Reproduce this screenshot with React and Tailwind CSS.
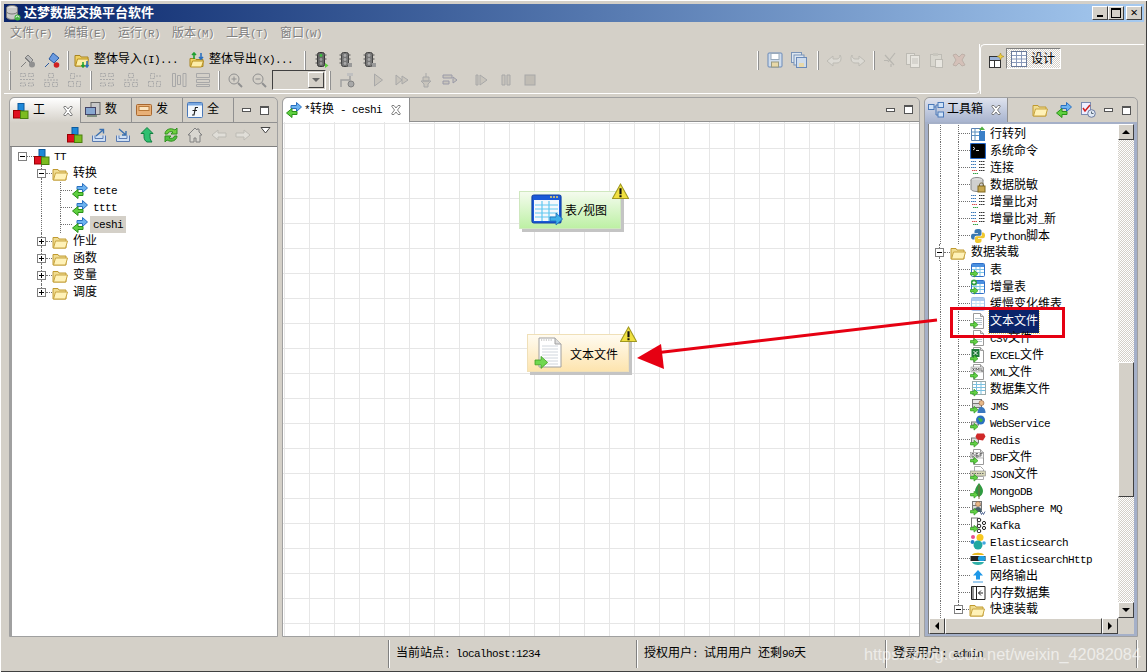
import React from 'react';

const FONT = '"Liberation Mono", "Noto Sans CJK SC", monospace';

// latin runs sit in a narrow span so they take the 6px cell of the original bitmap font
function Label({ text, className = '' }) {
  const parts = text.split(/([\x00-\x7f]+)/).filter(Boolean);
  return (
    <span className={`whitespace-pre text-[12px] leading-[14px] ${className}`}>
      {parts.map((p, i) =>
        /^[\x00-\x7f]/.test(p) ? <span key={i} className="text-[11px] tracking-[-0.6px]">{p}</span> : <span key={i}>{p}</span>
      )}
    </span>
  );
}

const GA = () => <path d="M0.5 12.5h3.5v-2.2l4 3.4-4 3.4v-2.2H0.5z" transform="translate(0 -2)" fill="#62d045" stroke="#2f9a1f" strokeWidth=".7" />;
const DocBase = ({ children }) => (
  <>
    <path d="M3.5 .5h7l3 3v12h-10z" fill="#fff" stroke="#9a9a9a" />
    <path d="M10.5 .5v3h3" fill="#ddd" stroke="#9a9a9a" />
    {children}
    <GA />
  </>
);
const Lines = () => <path d="M5 5.5h7M5 7.5h7M5 9.5h7M5 11.5h7" stroke="#b8c4cc" />;
const TableBase = ({ faded }) => (
  <g opacity={faded ? 0.45 : 1}>
    <rect x="1.5" y="1.5" width="13" height="13" rx="1" fill="#fff" stroke="#2f6fc8" />
    <rect x="2" y="2" width="12" height="3" fill="#4a90e0" />
    <path d="M2 7.5h12M2 10.5h12M6 5v9M10 5v9" stroke="#7fc4e8" />
  </g>
);
const Server = () => (
  <>
    <rect x="2.5" y="1.5" width="9" height="4" fill="#e8e8e8" stroke="#777" />
    <rect x="2.5" y="5.5" width="9" height="4" fill="#d8d8d8" stroke="#777" />
  </>
);
const ColorGrid = () => (
  <>
    <path d="M1 1.5h5M1 4.5h5M1 7.5h5" stroke="#3a78b8" strokeWidth="1.2" strokeDasharray="1.5 .5" />
    <path d="M9 1.5h6M9 4.5h6M9 7.5h6M9 10.500h6" stroke="#333" strokeWidth="1.2" strokeDasharray="1.5 .5" />
    <path d="M2 10.500h5" stroke="#d85050" strokeWidth="1.2" strokeDasharray="1.5 .5" />
    <path d="M3 13.500h5" stroke="#30a040" strokeWidth="1.2" strokeDasharray="1.5 .5" />
  </>
);

const ICONS = {
  blocks: (
    <>
      <rect x="5" y="0.5" width="6" height="7" fill="#1e88d8" stroke="#0c5a9e" />
      <rect x="0.5" y="7.5" width="7" height="7.5" fill="#e01020" stroke="#900" />
      <rect x="7.5" y="8" width="7.5" height="7.5" fill="#7cbc20" stroke="#4a8010" />
    </>
  ),
  folder: (
    <>
      <path d="M1 3.5h5l1 1.5h7v9H1z" fill="#f0dc90" stroke="#c09a30" />
      <path d="M1.5 14l2-7h12l-2 7z" fill="#fff2b8" stroke="#c8a440" />
    </>
  ),
  swap: (
    <>
      <path d="M5 3.5h5.5v-3l5 4.5-5 4.5v-3H5z" fill="#6cb2f0" stroke="#2a70c0" />
      <path d="M11 9.5H6v-3l-5.5 4.5L6 15.5v-3h5z" fill="#5fd040" stroke="#2a9018" />
    </>
  ),
  plugOff: (
    <>
      <path d="M1 15l5-5M6 6l4 4M8 3l5 5-3 3-5-5z" fill="#bbb" stroke="#808080" />
      <circle cx="12" cy="12.500" r="3" fill="#909090" />
    </>
  ),
  plugOn: (
    <>
      <path d="M1 15l4-4M9 1l6 5-5 5-5-4z" fill="#6a9ae0" stroke="#2a5aa0" />
      <circle cx="12.500" cy="13" r="2.800" fill="#d02020" />
    </>
  ),
  folderIn: (
    <>
      <path d="M1 3.5h5l1 1.5h7v9H1z" fill="#f0d060" stroke="#a88420" />
      <path d="M1.5 14l2-7h11l-2 7z" fill="#fdeea8" stroke="#b89020" />
      <path d="M9 10v5M7.5 13l1.5 2 1.5-2" stroke="#20a030" fill="none" strokeWidth="1.5" />
      <path d="M13 9v6M11.5 13l1.5 2 1.5-2" stroke="#2a70c0" fill="none" strokeWidth="1.5" />
    </>
  ),
  folderOut: (
    <>
      <path d="M1 6.5h5l1 1h7v7H1z" fill="#f0d060" stroke="#a88420" />
      <path d="M1.5 15l2-6h11l-2 6z" fill="#fdeea8" stroke="#b89020" />
      <path d="M5 7V1M3 3l2-2 2 2" stroke="#20a030" fill="none" strokeWidth="1.6" />
      <path d="M12 1v6M10 5l2 2 2-2" stroke="#2a70c0" fill="none" strokeWidth="1.6" />
    </>
  ),
  lightOn: (
    <>
      <rect x="4.5" y="0.5" width="7" height="14" rx="2" fill="#666" stroke="#333" />
      <circle cx="8" cy="3.5" r="1.4" fill="#3bc040" />
      <circle cx="8" cy="7.5" r="1.4" fill="#999" />
      <circle cx="8" cy="11.5" r="1.4" fill="#999" />
      <path d="M2.5 3h2M2.5 7h2M2.5 11h2M11.5 3h2M11.5 7h2" stroke="#555" />
      <path d="M12 11l3.5 2.5-3.5 2.5z" fill="#5fd040" />
    </>
  ),
  lightOff: (
    <>
      <rect x="4.5" y="0.5" width="7" height="14" rx="2" fill="#777" stroke="#444" />
      <circle cx="8" cy="3.5" r="1.4" fill="#aaa" />
      <circle cx="8" cy="7.5" r="1.4" fill="#aaa" />
      <circle cx="8" cy="11.5" r="1.4" fill="#aaa" />
      <path d="M2.5 3h2M2.5 7h2M2.5 11h2M11.5 3h2M11.5 7h2" stroke="#555" />
      <rect x="11" y="11" width="4" height="4" fill="#999" />
    </>
  ),
  layA: <path d="M1.5 1.5h5v3h-5zM9.5 1.5h5v3h-5zM1.5 11h5v3h-5zM9.5 11h5v3h-5zM1 7.5h14" fill="none" stroke="#a8a8a8" strokeDasharray="2 1" />,
  layB: <path d="M5.5 1.5h5v4h-5zM1.5 10.5h5v4h-5zM9.5 10.5h5v4h-5zM1 8h14" fill="none" stroke="#a8a8a8" strokeDasharray="2 1" />,
  layC: <path d="M3.5 1.5h4v5h-4zM9.5 9.5h4v5h-4zM1.5 9.5h5v5h-5zM9 4h6" fill="none" stroke="#a8a8a8" strokeDasharray="2 1" />,
  layD: <path d="M1.5 1.5h3v13h-3zM6.5 3.5h3v9h-3zM12 1.5h3v13h-3z" fill="none" stroke="#a8a8a8" />,
  layE: <path d="M1.5 1.5h13v4h-13zM1.5 7.5h13v3h-13zM1.5 12.5h13v2h-13z" fill="none" stroke="#a8a8a8" />,
  zoomIn: (
    <>
      <circle cx="7" cy="7" r="5" fill="none" stroke="#909090" />
      <path d="M4.5 7h5M7 4.5v5" stroke="#909090" />
      <path d="M11 11l4 4" stroke="#909090" strokeWidth="2" />
    </>
  ),
  zoomOut: (
    <>
      <circle cx="7" cy="7" r="5" fill="none" stroke="#909090" />
      <path d="M4.5 7h5" stroke="#909090" />
      <path d="M11 11l4 4" stroke="#909090" strokeWidth="2" />
    </>
  ),
  route: (
    <>
      <path d="M2 15V8h9V2" fill="none" stroke="#a0a0a0" strokeWidth="1.5" />
      <rect x="8" y="1" width="6" height="3" fill="#c0c0c0" />
      <circle cx="12" cy="12" r="3" fill="#a8a8a8" stroke="#808080" />
    </>
  ),
  run: <path d="M4.5 2l8 6-8 6z" fill="#c8c4bc" stroke="#a8a8a8" />,
  run2: <path d="M2 3l6 5-6 5zM8 4l6 4-6 4z" fill="#c8c4bc" stroke="#a8a8a8" />,
  bug: <path d="M8 1v4M5 5h6v4H5zM3 9h10l-3 3v3H6v-3z" fill="#c8c4bc" stroke="#a8a8a8" />,
  step: <path d="M1 3h9v3H1zM1 9h6v3H1zM11 5l4 3-4 3z" fill="#c8c4bc" stroke="#9a9aa8" />,
  pauseRun: <path d="M2 3h2v10H2zM6 3l7 5-7 5z" fill="#c8c4bc" stroke="#a8a8a8" />,
  pause: <path d="M4 3h3v10H4zM9 3h3v10H9z" fill="#c8c4bc" stroke="#a8a8a8" />,
  stop: <rect x="3" y="3" width="10" height="10" fill="#c0bcb4" stroke="#a8a8a8" />,
  save: (
    <>
      <rect x="1" y="1" width="14" height="14" rx="1" fill="#cfdcec" stroke="#6a8ab8" />
      <rect x="4" y="1.5" width="8" height="6" fill="#fff" stroke="#9ab" />
      <rect x="4.5" y="10" width="7" height="5" fill="#e8d8a8" stroke="#9a9a80" />
    </>
  ),
  saveAll: (
    <>
      <rect x="0.5" y="0.5" width="10" height="10" fill="#dde6f0" stroke="#7a94b8" />
      <rect x="3" y="3" width="10" height="10" fill="#dde6f0" stroke="#7a94b8" />
      <rect x="5.5" y="5.5" width="10" height="10" fill="#cfdcec" stroke="#6a8ab8" />
      <rect x="8" y="11" width="5" height="4" fill="#e8d8a8" />
    </>
  ),
  undo: <path d="M1 9l6-5v3h4c2 0 3-2 3-4 2 3 1 8-3 8H7v3z" fill="#dcdad4" stroke="#bdbbb4" />,
  redo: <path d="M15 9l-6-5v3H5C3 7 2 5 2 3c-2 3-1 8 3 8h4v3z" fill="#dcdad4" stroke="#bdbbb4" />,
  cut: <path d="M13 1L6 10M3 3l9 10M2 8.5h4M9 12v3" fill="none" stroke="#b8b6b0" strokeWidth="1.2" />,
  copy: (
    <>
      <rect x="1.5" y="1.5" width="8" height="11" fill="#e4e2dc" stroke="#bdbbb4" />
      <rect x="5.5" y="3.5" width="9" height="12" fill="#e8e6e0" stroke="#bdbbb4" />
      <path d="M7 7h6M7 9h6M7 11h6" stroke="#c4c2bc" />
    </>
  ),
  paste: (
    <>
      <rect x="2.5" y="2.5" width="11" height="12" fill="#d8d6ce" stroke="#bdbbb4" />
      <rect x="5" y="1" width="5" height="3" fill="#c8c6be" />
      <rect x="7.5" y="7.5" width="7" height="8" fill="#e8e6e0" stroke="#bdbbb4" />
    </>
  ),
  del: <path d="M2 3l3-1 3 3 3-3 3 1-3 5 3 5-3 1-3-3-3 3-3-1 3-5z" fill="#d4c0b8" stroke="#bdb0a8" />,
  newPersp: (
    <>
      <rect x="1.5" y="3.5" width="11" height="11" fill="#fff" stroke="#333" />
      <path d="M1.5 7.5h11M6.5 7.5v7" stroke="#333" />
      <rect x="2" y="4" width="10" height="3" fill="#9ab2d8" />
      <path d="M12.5 0l1 2.5 2.5 1-2.5 1-1 2.5-1-2.5-2.5-1 2.5-1z" fill="#f0d040" stroke="#a08010" strokeWidth=".5" />
    </>
  ),
  grid: (
    <>
      <rect x="0.5" y="0.5" width="15" height="15" fill="#fff" stroke="#6a7a9a" />
      <path d="M5.5 1v14M10.5 1v14M1 4.5h14M1 8h14M1 11.5h14" stroke="#8a9aba" />
    </>
  ),
  fx: (
    <>
      <rect x="0.5" y="0.5" width="15" height="15" rx="1" fill="#f4f8fc" stroke="#4a78b8" />
      <rect x="1" y="1" width="14" height="2.500" fill="#7aa8e0" />
      <path d="M11 5.500H8.500L7 13H5M5.500 8.500h4.500" fill="none" stroke="#222" strokeWidth="1.200" />
    </>
  ),
  computer: (
    <>
      <rect x="6" y="0.500" width="9" height="12" fill="#c8c8c8" stroke="#666" />
      <rect x="0.500" y="5.500" width="10" height="7" fill="#88a8d0" stroke="#446" />
      <rect x="2" y="13" width="10" height="2" fill="#809080" />
    </>
  ),
  inbox: (
    <>
      <rect x="0.500" y="2.500" width="15" height="11" rx="1" fill="#e8b078" stroke="#a86830" />
      <rect x="3" y="4.500" width="10" height="4" fill="#fbe4c0" stroke="#b87838" />
    </>
  ),
  toolbox: (
    <>
      <rect x="0.5" y="2.5" width="5.5" height="5" fill="#cfe2f8" stroke="#4a78b8" />
      <rect x="10" y="0.5" width="5.5" height="5" fill="#cfe2f8" stroke="#4a78b8" />
      <rect x="10" y="10" width="5.5" height="5" fill="#cfe2f8" stroke="#4a78b8" />
      <path d="M6 5h2M8 3v10h2M8 3h2" fill="none" stroke="#4a78b8" />
    </>
  ),
  check: (
    <>
      <rect x="1.5" y="0.5" width="9" height="12" fill="#eef" stroke="#7a8ab0" />
      <path d="M3 6l2 3 5-6" stroke="#d02020" strokeWidth="1.5" fill="none" />
      <circle cx="11.5" cy="11.5" r="3.8" fill="#dfe8f4" stroke="#6a7aa0" />
      <path d="M11.5 9.5v2h2" stroke="#567" fill="none" />
    </>
  ),
  exportUp: (
    <>
      <path d="M1.5 8.5v6h13v-6M4 8.5v3h8v-3" fill="#cfe0f4" stroke="#5a7ab0" />
      <path d="M5 9l7-6M8.5 2.5h4v4" fill="none" stroke="#3a70b0" strokeWidth="1.4" />
    </>
  ),
  importDown: (
    <>
      <path d="M1.5 8.5v6h13v-6M4 8.5v3h8v-3" fill="#cfe0f4" stroke="#5a7ab0" />
      <path d="M4 2l7 6M11 4v4H7" fill="none" stroke="#3a70b0" strokeWidth="1.4" />
    </>
  ),
  upGreen: <path d="M8 0.5l6 6h-3v3c0 3 1 4 2 5.5H8c-2-1-3-3-3-5.5v-3H2z" fill="#30c070" stroke="#108040" />,
  sync: (
    <>
      <path d="M2 7c0-4 5-7 10-4l2-2v6H8l2-2C7 4 5 5 4.500 7z" fill="#70d040" stroke="#309020" />
      <path d="M14 9c0 4-5 7-10 4l-2 2V9h6l-2 2c3 1 5 0 5.500-2z" fill="#50c040" stroke="#309020" />
    </>
  ),
  home: <path d="M8 1L1 8h2v7h4v-4h2v4h4V8h2l-3-3V2h-2v1z" fill="#d8d6d0" stroke="#808080" />,
  left: <path d="M1 8l6-5v3h8v4H7v3z" fill="#e0ded8" stroke="#bdbbb4" />,
  right: <path d="M15 8L9 3v3H1v4h8v3z" fill="#e0ded8" stroke="#bdbbb4" />,
  db: (
    <>
      <ellipse cx="7" cy="3" rx="5.500" ry="2.500" fill="#e0e0e0" stroke="#777" />
      <path d="M1.5 3v9c0 1.500 3 2.500 5.500 2.500s5.500-1 5.500-2.500V3" fill="#c8c8c8" stroke="#777" />
      <path d="M1.5 6.500c0 1.500 3 2.500 5.500 2.500s5.500-1 5.500-2.500" fill="none" stroke="#777" />
      <circle cx="12.500" cy="12.500" r="3" fill="#40b040" />
      <path d="M11 12.500a1.500 1.500 0 0 1 3 0" fill="none" stroke="#fff" />
    </>
  ),
  tFlip: (
    <>
      <path d="M1.5 2.500h9v12h-9z" fill="#fff" stroke="#5a80b0" />
      <path d="M1.500 6h9M1.500 9.500h9M5 2.500v12" stroke="#5a90c0" />
      <rect x="9" y="5" width="6" height="10" fill="#3a80c8" />
      <path d="M9 4l3-3.500 3 3.500z" fill="#50b040" />
    </>
  ),
  terminal: (
    <>
      <rect x="0.500" y="0.500" width="15" height="15" rx="1" fill="#000" stroke="#2a6ac8" strokeWidth="1.200" />
      <path d="M3 4l2 1.500-2 1.500M6 7.500h3" stroke="#ddd" fill="none" />
    </>
  ),
  conn: <ColorGrid />,
  mask: (
    <>
      <ellipse cx="7" cy="3" rx="6" ry="2.500" fill="#e0e0e0" stroke="#888" />
      <path d="M1 3v9c0 1.500 3 2.500 6 2.500s6-1 6-2.500V3" fill="#d0d0d0" stroke="#888" />
      <rect x="8" y="9" width="7" height="6" fill="#c8a850" stroke="#806820" />
      <path d="M9.500 9V7.500c0-2 4-2 4 0V9" fill="none" stroke="#706030" />
    </>
  ),
  python: (
    <>
      <path d="M8 1C5 1 4.500 2 4.500 3.500V5H8v.7H3C1.500 5.700 1 7 1 8.500s.5 3 2 3h1.500V9.500c0-1 .8-1.800 1.800-1.800h3.400c1 0 1.800-.8 1.800-1.800V3C11.500 1.500 10 1 8 1z" fill="#3a78b0" />
      <path d="M8 15c3 0 3.500-1 3.500-2.500V11H8v-.7h5c1.500 0 2-1.300 2-2.800s-.5-3-2-3h-1V6.500c0 1-.8 1.800-1.800 1.800H6.800c-1 0-1.800.8-1.800 1.800V13c0 1.500 1 2 3 2z" fill="#f0c830" />
    </>
  ),
  tbl: (
    <>
      <TableBase />
      <GA />
    </>
  ),
  tblPlus: (
    <>
      <TableBase />
      <circle cx="4" cy="3.500" r="3" fill="#30a040" />
      <path d="M2.500 3.500h3M4 2v3" stroke="#fff" />
      <GA />
    </>
  ),
  tblFaded: <TableBase faded />,
  doc: (
    <DocBase>
      <Lines />
    </DocBase>
  ),
  csv: (
    <DocBase>
      <Lines />
    </DocBase>
  ),
  excel: (
    <DocBase>
      <rect x="1.500" y="2" width="8" height="8" fill="#1f7a3a" />
      <path d="M3.500 4l4 4M7.500 4l-4 4" stroke="#fff" />
    </DocBase>
  ),
  xml: (
    <DocBase>
      <rect x="1" y="3" width="12" height="5" fill="#e8e8e8" stroke="#888" strokeWidth=".5" />
      <path d="M2.500 4l2 3M4.500 4l-2 3M6 7V4l1.500 2L9 4v3M11 4v3h2" stroke="#333" strokeWidth=".6" fill="none" />
    </DocBase>
  ),
  dataset: (
    <>
      <rect x="2.500" y="0.500" width="13" height="13" fill="#fff" stroke="#9aa" />
      <path d="M3 3.500h12M3 6.500h12M3 9.500h12M6.500 1v12M11 1v12" stroke="#7ac0e0" />
      <GA />
    </>
  ),
  jms: (
    <>
      <Server />
      <circle cx="11.500" cy="5" r="2.500" fill="#e8b888" stroke="#805030" strokeWidth=".5" />
      <path d="M7.500 15c0-4 2-6 4-6s4 2 4 6z" fill="#3a78c0" />
      <GA />
    </>
  ),
  ws: (
    <>
      <rect x="1.500" y="7" width="7" height="3" fill="#ddd" stroke="#777" />
      <circle cx="10.500" cy="5" r="4.500" fill="#2a70c0" />
      <path d="M8 3c2-1 3 1 4 1s1 3-1 3-2-2-3-4z" fill="#40b040" />
      <GA />
    </>
  ),
  redis: (
    <>
      <rect x="1.500" y="6" width="7" height="5" fill="#ddd" stroke="#777" />
      <path d="M7 1.500l7 0 1.500 3-2.500 4-6-1-1.500-3z" fill="#d02828" />
      <GA />
    </>
  ),
  dbf: (
    <DocBase>
      <rect x="0.500" y="3.500" width="13" height="5.500" fill="#f4f4f4" stroke="#888" strokeWidth=".5" />
      <path d="M2 4.500v3.500h1.500l.8-1.700L3.500 4.500zM6 4.500v3.500h2.200V6.300H6M6 4.500h2M10 4.500v3.500M10 4.500h2.500M10 6h2" stroke="#222" strokeWidth=".6" fill="none" />
    </DocBase>
  ),
  json: (
    <>
      <path d="M4.500 .5h6l3 3v4h-9z" fill="#fff" stroke="#aaa" />
      <rect x="0.500" y="5" width="15" height="5" fill="#d8d8b8" stroke="#888" strokeWidth=".6" />
      <path d="M2 7.500h12" stroke="#666" strokeDasharray="1.500 1" />
      <path d="M4.500 10.500h9v3h-9z" fill="#fff" stroke="#aaa" />
      <GA />
    </>
  ),
  mongo: (
    <>
      <path d="M9 0c2 3 4 5 4 8s-2 5-4 6c-2-1-4-3-4-6s2-5 4-8z" fill="#2f9a40" />
      <path d="M9 2v14" stroke="#7a6a40" />
      <GA />
    </>
  ),
  mq: (
    <>
      <Server />
      <circle cx="8" cy="4" r="2.500" fill="#e8b888" stroke="#805030" strokeWidth=".5" />
      <path d="M4 12c0-3 2-5 4-5s4 2 4 5z" fill="#48606a" />
      <path d="M10 11.500l1.500 3 1-2 1 2 1.500-3" stroke="#304a80" fill="none" strokeWidth=".8" />
      <GA />
    </>
  ),
  kafka: (
    <>
      <rect x="1.500" y="1" width="6" height="9" fill="#fff" stroke="#777" />
      <circle cx="9" cy="3" r="1.800" fill="#fff" stroke="#222" />
      <circle cx="9" cy="9" r="1.800" fill="#fff" stroke="#222" />
      <circle cx="9" cy="14" r="1.800" fill="#fff" stroke="#222" />
      <circle cx="14" cy="6" r="1.600" fill="#fff" stroke="#222" />
      <circle cx="14" cy="11" r="1.600" fill="#fff" stroke="#222" />
      <GA />
    </>
  ),
  es: (
    <>
      <circle cx="10" cy="3.500" r="3.500" fill="#f8c820" />
      <circle cx="3" cy="3" r="2" fill="#e85090" />
      <circle cx="8" cy="11" r="4.500" fill="#20a8a0" />
      <circle cx="2.500" cy="8" r="2" fill="#2080c8" />
      <circle cx="14" cy="9" r="1.800" fill="#40a8e0" />
    </>
  ),
  esHttp: (
    <>
      <path d="M2 4c1-3 11-3 12 0z" fill="#e8b820" />
      <rect x="0.500" y="5" width="15" height="5" fill="#222" />
      <rect x="8" y="5" width="7.500" height="5" rx="2" fill="#20a0e0" />
      <path d="M2 11c1 4 11 4 12 0z" fill="#30b0a8" />
    </>
  ),
  upBlue: (
    <>
      <path d="M8 2l5 5.500H10v4H6v-4H3z" fill="#1e98e8" />
      <path d="M3 14h10" stroke="#80bce8" strokeWidth="1.500" />
    </>
  ),
  mem: (
    <>
      <path d="M3 1.500H1.500v13H3M3 1.500h12v13H3zM6.500 1.500v13" fill="#fff" stroke="#222" />
      <path d="M13 8H8.500M11 5.500L8.500 8l2.500 2.500" fill="none" stroke="#222" />
    </>
  ),
  warn: (
    <>
      <path d="M8 1L15.500 14.500H.5z" fill="#f0e040" stroke="#a09820" />
      <path d="M8 5v5.500M8 11.500v2" stroke="#111" strokeWidth="2" />
    </>
  ),
  bigWin: (
    <>
      <rect x="0.500" y="0.500" width="14.500" height="14" rx="1" fill="#1a5ad8" stroke="#1040a8" strokeWidth=".6" />
      <rect x="1.500" y="3" width="12.500" height="10.500" fill="#f4f8fc" />
      <path d="M9.500 1.500h1M11 1.500h1M12.500 1.500h1" stroke="#f0d060" strokeWidth=".8" />
      <path d="M2 5.500h11.500M2 7.500h11.500M2 9.500h11.500M2 11.500h11.500M5.500 3.500v10M9 3.500v10" stroke="#60c8f0" strokeWidth=".6" />
      <path d="M9.500 11.500h3v-2l3.300 3-3.300 3v-2h-3z" fill="#40b0e8" stroke="#2070b8" strokeWidth=".4" />
    </>
  ),
  bigDoc: (
    <>
      <path d="M2.500 .5h8l3 3v11.500h-11z" fill="#fff" stroke="#a0a0a0" strokeWidth=".5" />
      <path d="M10.500 .5v3h3" fill="#ddd" stroke="#a0a0a0" strokeWidth=".5" />
      <path d="M3.500 1.500h6" stroke="#aaa" strokeWidth=".6" strokeDasharray=".6 .6" />
      <path d="M4 4.500h8M4 6h8M4 7.500h8M4 9h8M4 10.500h8M4 12h8M4 13.500h8" stroke="#c4ccd4" strokeWidth=".4" />
      <path d="M0.500 11.500h3v-1.800l3.300 3-3.300 3v-1.800h-3z" fill="#70d850" stroke="#40a020" strokeWidth=".4" />
    </>
  ),
};

function Ico({ name, size = 16, className = '' }) {
  return (
    <svg width={size} height={size} viewBox="0 0 16 16" className={`shrink-0 ${className}`}>
      {ICONS[name]}
    </svg>
  );
}

const Sep = () => <span className="mx-[3px] h-[19px] w-[2px] shrink-0 border-l border-white border-r-[1px] border-r-[#909090]" />;

const ToolBtn = ({ name, className = 'w-[24px]' }) => (
  <span className={`flex h-[20px] shrink-0 items-center justify-center ${className}`}>
    <Ico name={name} />
  </span>
);

const MinMax = () => (
  <div className="flex items-center gap-[9px]">
    <span className="h-[4px] w-[9px] border border-[#555] bg-white" />
    <span className="h-[9px] w-[9px] border border-[#555] border-t-2 bg-white" />
  </div>
);

const Close = () => (
  <svg width="10" height="10" viewBox="0 0 10 10" className="block">
    <path d="M1 0.500h2L5 3l2-2.500h2L9.500 1 6.500 5l3 4L9 9.500H7L5 7 3 9.500H1L.5 9l3-4-3-4z" fill="#fff" stroke="#666" strokeWidth=".8" />
  </svg>
);

// expander box with the dotted guide running through it
const Expander = ({ open, up, down }) => (
  <span className="flex h-full w-[9px] shrink-0 flex-col items-center">
    <span className={`h-[4px] w-0 ${up ? 'border-l border-dotted border-[#707070]' : ''}`} />
    <span className="relative flex h-[9px] w-[9px] shrink-0 items-center justify-center border border-[#808080] bg-white">
      <span className="h-px w-[5px] bg-black" />
      {!open && <span className="absolute h-[5px] w-px bg-black" />}
    </span>
    <span className={`h-[4px] w-0 ${down ? 'border-l border-dotted border-[#707070]' : ''}`} />
  </span>
);

// dotted tree guides
const VGuide = ({ className }) => <span className={`h-full shrink-0 border-l border-dotted border-[#707070] ${className}`} />;
const HDots = ({ className }) => <span className={`h-0 shrink-0 border-t border-dotted border-[#707070] ${className}`} />;

function LeftTree() {
  const folders = ['作业', '函数', '变量', '调度'];
  const leaves = ['tete', 'tttt', 'ceshi'];
  return (
    <div className="flex-1 border-l-2 border-[#a0a0a0] bg-white pt-[1px]">
      <div className="flex h-[17px] items-center pl-[6px]">
        <Expander open />
        <HDots className="w-[7px]" />
        <Ico name="blocks" />
        <Label text="TT" className="ml-[4px]" />
      </div>
      <div className="flex h-[17px] items-center pl-[25px]">
        <Expander open up down />
        <HDots className="w-[6px]" />
        <Ico name="folder" />
        <Label text="转换" className="ml-[5px]" />
      </div>
      {leaves.map((l) => (
        <div key={l} className="flex h-[17px] items-center pl-[29px]">
          <VGuide className="w-[19px]" />
          <VGuide className="w-0" />
          <HDots className="w-[11px]" />
          <Ico name="swap" />
          <span className={`ml-[2px] flex h-[17px] items-center px-[3px] ${l === 'ceshi' ? 'bg-[#d4d0c8]' : ''}`}>
            <Label text={l} />
          </span>
        </div>
      ))}
      {folders.map((f, i) => (
        <div key={f} className="flex h-[17px] items-center pl-[25px]">
          <Expander up down={i < folders.length - 1} />
          <HDots className="w-[6px]" />
          <Ico name="folder" />
          <Label text={f} className="ml-[5px]" />
        </div>
      ))}
    </div>
  );
}

const RIGHT_ROWS = [
  ['tFlip', '行转列'],
  ['terminal', '系统命令'],
  ['conn', '连接'],
  ['mask', '数据脱敏'],
  ['conn', '增量比对'],
  ['conn', '增量比对_新'],
  ['python', 'Python脚本'],
  ['folder', '数据装载', 'group'],
  ['tbl', '表'],
  ['tblPlus', '增量表'],
  ['tblFaded', '缓慢变化维表'],
  ['doc', '文本文件', 'selected'],
  ['csv', 'CSV文件'],
  ['excel', 'EXCEL文件'],
  ['xml', 'XML文件'],
  ['dataset', '数据集文件'],
  ['jms', 'JMS'],
  ['ws', 'WebService'],
  ['redis', 'Redis'],
  ['dbf', 'DBF文件'],
  ['json', 'JSON文件'],
  ['mongo', 'MongoDB'],
  ['mq', 'WebSphere MQ'],
  ['kafka', 'Kafka'],
  ['es', 'Elasticsearch'],
  ['esHttp', 'ElasticsearchHttp'],
  ['upBlue', '网络输出'],
  ['mem', '内存数据集'],
  ['folder', '快速装载', 'sub'],
];

function RightTree() {
  return (
    <div className="min-w-0 flex-1 overflow-hidden bg-white pt-px">
      {RIGHT_ROWS.map(([icon, text, kind]) => {
        if (kind === 'group') {
          return (
            <div key={text} className="flex h-[17px] items-center pl-[6px]">
              <Expander open up down />
              <HDots className="w-[6px]" />
              <Ico name={icon} />
              <Label text={text} className="ml-[5px]" />
            </div>
          );
        }
        if (kind === 'sub') {
          return (
            <div key={text} className="flex h-[17px] items-center pl-[11px]">
              <VGuide className="w-[14px]" />
              <Expander open up />
              <HDots className="w-[6px]" />
              <Ico name={icon} />
              <Label text={text} className="ml-[5px]" />
            </div>
          );
        }
        return (
          <div key={text} className="flex h-[17px] items-center pl-[11px]">
            <VGuide className="w-[18px]" />
            <VGuide className="w-0" />
            <HDots className="w-[11px]" />
            <Ico name={icon} />
            <span
              className={`ml-[3px] px-px ${kind === 'selected' ? 'bg-[#0a246a] text-white outline-1 outline-dotted outline-[#e8d060]' : ''}`}
            >
              <Label text={text} />
            </span>
          </div>
        );
      })}
    </div>
  );
}

const HATCH = 'bg-[repeating-conic-gradient(#d4d0c8_0_25%,#ffffff_0_50%)] bg-[length:2px_2px]';
const BEVEL = 'border border-t-white border-l-white border-r-[#404040] border-b-[#404040] bg-[#d4d0c8]';

const ScrollBtn = ({ dir, className = '' }) => (
  <span className={`flex h-[16px] w-[16px] shrink-0 items-center justify-center ${BEVEL} ${className}`}>
    <span
      className={
        dir === 'up'
          ? 'h-0 w-0 border-x-[4px] border-b-[4px] border-x-transparent border-b-black'
          : dir === 'down'
            ? 'h-0 w-0 border-x-[4px] border-t-[4px] border-x-transparent border-t-black'
            : dir === 'left'
              ? 'h-0 w-0 border-y-[4px] border-r-[4px] border-y-transparent border-r-black'
              : 'h-0 w-0 border-y-[4px] border-l-[4px] border-y-transparent border-l-black'
      }
    />
  </span>
);

function CanvasNode({ icon, text, className, wrap, iconClass, labelClass }) {
  return (
    <div className={`absolute h-[38px] w-[102px] ${className}`}>
      <div className={`flex h-full items-center border shadow-[3px_3px_0_#c4c4c4] ${wrap}`}>
        <Ico name={icon} size={32} className={iconClass} />
        <Label text={text} className={labelClass} />
      </div>
      <Ico name="warn" size={17} className="absolute -top-[8px] -right-[8px]" />
    </div>
  );
}

export default function App() {
  return (
    <div
      className="relative flex h-[672px] w-[1147px] flex-col overflow-hidden border-t border-l border-white bg-[#d4d0c8] px-[3px] pt-[3px] text-black shadow-[inset_-1px_-1px_0_#404040]"
      style={{ fontFamily: FONT }}
    >
      {/* title bar */}
      <div className="flex h-[18px] shrink-0 items-center bg-gradient-to-r from-[#0a246a] to-[#a6caf0] pr-[2px] pl-[1px]">
        <Ico name="db" />
        <span className="ml-[3px] text-[13px] leading-none font-bold text-white">达梦数据交换平台软件</span>
        <div className="ml-auto flex gap-0">
          <span className={`flex h-[14px] w-[16px] items-end justify-center pb-[2px] ${BEVEL}`}>
            <span className="h-[2px] w-[6px] bg-black" />
          </span>
          <span className={`flex h-[14px] w-[16px] items-center justify-center ${BEVEL}`}>
            <span className="h-[10px] w-[10px] border border-t-2 border-black" />
          </span>
          <span className={`ml-[2px] flex h-[14px] w-[16px] items-center justify-center text-[12px] leading-none font-bold ${BEVEL}`}>
            ✕
          </span>
        </div>
      </div>

      {/* menu */}
      <div className="flex h-[22px] shrink-0 items-center pl-[6px] text-[#808080] [text-shadow:1px_1px_0_#fff]">
        {['文件(F)', '编辑(E)', '运行(R)', '版本(M)', '工具(T)', '窗口(W)'].map((m) => (
          <span key={m} className="w-[54px]">
            <Label text={m} />
          </span>
        ))}
      </div>

      {/* toolbars + perspective switcher */}
      <div className="flex h-[50px] shrink-0">
        <div className="flex-1 rounded-br-[5px] border-r border-b border-white pt-[6px]">
          <div className="flex h-[20px] items-center pl-[2px]">
            <Sep />
            <span className="w-[2px]" />
            <ToolBtn name="plugOff" />
            <ToolBtn name="plugOn" />
            <Sep />
            <span className="flex w-[117px] items-center pl-[2px]">
              <Ico name="folderIn" />
              <Label text="整体导入(I)..." className="ml-[4px]" />
            </span>
            <span className="flex w-[112px] items-center">
              <Ico name="folderOut" />
              <Label text="整体导出(X)..." className="ml-[4px]" />
            </span>
            <Sep />
            <ToolBtn name="lightOn" />
            <ToolBtn name="lightOff" />
            <ToolBtn name="lightOff" />
            <span className="flex-1" />
            <Sep />
            <span className="w-[1px]" />
            <ToolBtn name="save" />
            <ToolBtn name="saveAll" />
            <span className="w-[3px]" />
            <Sep />
            <ToolBtn name="undo" />
            <ToolBtn name="redo" />
            <Sep />
            <ToolBtn name="cut" className="w-[23px]" />
            <ToolBtn name="copy" className="w-[23px]" />
            <ToolBtn name="paste" className="w-[23px]" />
            <ToolBtn name="del" className="w-[23px]" />
            <span className="w-[9px]" />
          </div>
          <div className="flex h-[20px] items-center pl-[2px]">
            <Sep />
            <span className="w-[1px]" />
            <ToolBtn name="layA" />
            <ToolBtn name="layB" />
            <ToolBtn name="layC" />
            <Sep />
            <ToolBtn name="layA" />
            <ToolBtn name="layB" />
            <ToolBtn name="layC" />
            <ToolBtn name="layD" />
            <ToolBtn name="layE" />
            <Sep />
            <ToolBtn name="zoomIn" />
            <ToolBtn name="zoomOut" />
            <span className="ml-[1px] flex h-[20px] w-[54px] items-center justify-end border border-t-[#404040] border-l-[#404040] border-r-white border-b-white bg-[#d4d0c8] pr-px">
              <span className={`flex h-[16px] w-[16px] items-center justify-center ${BEVEL}`}>
                <span className="h-0 w-0 border-x-[4px] border-t-[4px] border-x-transparent border-t-[#666]" />
              </span>
            </span>
            <Sep />
            <span className="w-[1px]" />
            <ToolBtn name="route" />
            <span className="w-[7px]" />
            <ToolBtn name="run" />
            <ToolBtn name="run2" />
            <ToolBtn name="bug" />
            <ToolBtn name="step" />
            <span className="w-[8px]" />
            <ToolBtn name="pauseRun" />
            <ToolBtn name="pause" />
            <ToolBtn name="stop" />
          </div>
        </div>
        <div className="flex h-full w-[164px] shrink-0 items-start gap-[2px] rounded-tl-[5px] border-t border-l border-white pt-[3px] pl-[7px]">
          <Ico name="newPersp" className="mt-[5px]" />
          <span className={`flex h-[21px] w-[55px] items-center gap-[4px] border border-t-[#808080] border-l-[#808080] border-r-white border-b-white pl-[4px] ${HATCH}`}>
            <Ico name="grid" />
            <Label text="设计" className="translate-y-px" />
          </span>
        </div>
      </div>

      {/* three panels */}
      <div className="mt-[3px] flex h-[540px] shrink-0 gap-[4px] pl-[5px]">
        {/* left */}
        <div className="flex w-[269px] shrink-0 flex-col overflow-hidden rounded-t-[5px] border border-[#a0a0a0]">
          <div className="flex h-[25px] shrink-0 items-stretch">
            <div className="flex w-[71px] items-center gap-[4px] rounded-tl-[5px] border-r border-[#909090] bg-gradient-to-b from-white to-[#d4d0c8] pl-[3px]">
              <Ico name="blocks" />
              <Label text="工" />
              <span className="ml-auto pr-[7px]">
                <Close />
              </span>
            </div>
            {[
              ['computer', '数'],
              ['inbox', '发'],
              ['fx', '全'],
            ].map(([ic, t]) => (
              <div key={t} className="flex w-[51px] items-center gap-[4px] border-r border-b border-[#909090] pl-[4px]">
                <Ico name={ic} />
                <Label text={t} />
              </div>
            ))}
            <div className="flex flex-1 items-center justify-center border-b border-[#909090]">
              <MinMax />
            </div>
          </div>
          <div className="flex h-[24px] shrink-0 items-center justify-end border-b border-[#808080] pr-[6px]">
            <ToolBtn name="blocks" />
            <ToolBtn name="exportUp" />
            <ToolBtn name="importDown" />
            <ToolBtn name="upGreen" />
            <ToolBtn name="sync" />
            <ToolBtn name="home" />
            <ToolBtn name="left" />
            <ToolBtn name="right" />
            <svg width="11" height="7" viewBox="0 0 11 7" className="mb-[8px] ml-[5px] shrink-0">
              <path d="M1 .5h9L5.500 6z" fill="#fff" stroke="#444" />
            </svg>
          </div>
          <LeftTree />
        </div>

        {/* center */}
        <div className="flex w-[638px] shrink-0 flex-col overflow-hidden rounded-t-[5px] border border-[#a0a0a0]">
          <div className="flex h-[24px] shrink-0 items-stretch">
            <div className="flex w-[127px] items-center gap-[2px] rounded-tl-[5px] border-r border-[#909090] bg-white pl-[3px]">
              <Ico name="swap" />
              <Label text="*转换 - ceshi" />
              <span className="ml-auto pr-[8px]">
                <Close />
              </span>
            </div>
            <div className="flex flex-1 items-center justify-end border-b border-[#909090] pr-[6px]">
              <MinMax />
            </div>
          </div>
          <div className="relative flex-1 bg-white bg-[linear-gradient(#e6e6e6_1px,transparent_1px),linear-gradient(90deg,#e6e6e6_1px,transparent_1px)] bg-[length:25px_25px] bg-[position:1px_1px]">
            <CanvasNode
              icon="bigWin"
              text="表/视图"
              className="top-[69px] left-[236px]"
              iconClass="ml-[11px]"
              labelClass="ml-[2px] translate-y-[2px]"
              wrap="border-[#cfe8bf] bg-gradient-to-b from-[#f4fbee] to-[#bdf0a4]"
            />
            <CanvasNode
              icon="bigDoc"
              text="文本文件"
              className="top-[212px] left-[244px]"
              iconClass="ml-[6px]"
              labelClass="ml-[4px] translate-y-[3px]"
              wrap="border-[#f0e0b8] bg-gradient-to-b from-[#fffbf0] to-[#fde4ae]"
            />
          </div>
        </div>

        {/* right */}
        <div className="flex w-[214px] shrink-0 flex-col overflow-hidden rounded-t-[5px] border border-[#a0a0a0]">
          <div className="flex h-[24px] shrink-0 items-stretch">
            <div className="flex w-[83px] items-center gap-[3px] rounded-tl-[5px] border-r border-[#909090] bg-gradient-to-b from-[#dfe3ee] to-[#a8b4cf] pl-[3px]">
              <Ico name="toolbox" />
              <Label text="工具箱" />
              <span className="ml-auto pr-[6px]">
                <Close />
              </span>
            </div>
            <div className="flex flex-1 items-center justify-end gap-[8px] pr-[6px]">
              <Ico name="folder" />
              <Ico name="swap" />
              <Ico name="check" />
              <MinMax />
            </div>
          </div>
          <div className="flex flex-1 flex-col border-x-[3px] border-t-[2px] border-b-[4px] border-[#a5b0c8] bg-[#d4d0c8]">
            <div className="flex min-h-0 flex-1 border-l border-[#808080]">
              <RightTree />
              <div className={`flex w-[16px] shrink-0 flex-col ${HATCH}`}>
                <ScrollBtn dir="up" />
                <span className="h-[222px]" />
                <span className={`h-[135px] w-[16px] ${BEVEL}`} />
                <span className="flex-1" />
                <ScrollBtn dir="down" />
              </div>
            </div>
            <div className="flex h-[16px] shrink-0 border-l border-[#808080] bg-[#d4d0c8] pr-[16px]">
              <ScrollBtn dir="left" />
              <span className={`h-[16px] flex-1 ${BEVEL}`} />
              <ScrollBtn dir="right" />
            </div>
          </div>
        </div>
      </div>

      {/* status bar */}
      <div className="mt-[3px] flex flex-1 items-stretch pb-[4px] pl-[384px]">
        <div className="flex w-[248px] items-center border-l border-[#808080] pl-[7px] shadow-[inset_1px_0_0_#fff]">
          <Label text="当前站点: localhost:1234" />
        </div>
        <div className="flex w-[249px] items-center border-l border-[#808080] pl-[7px] shadow-[inset_1px_0_0_#fff]">
          <Label text="授权用户: 试用用户 还剩90天" />
        </div>
        <div className="flex flex-1 items-center border-l border-[#808080] pl-[7px] shadow-[inset_1px_0_0_#fff]">
          <Label text="登录用户: admin" />
        </div>
        <div className="w-[8px] border-l border-[#808080] shadow-[inset_1px_0_0_#fff]" />
      </div>

      {/* annotation drawn over the screenshot */}
      <svg className="pointer-events-none absolute top-[-1px] left-[-1px]" width="1147" height="672">
        <path d="M937 320L655 353" stroke="#e60012" strokeWidth="3" fill="none" />
        <path d="M637 358L661 344L664 369z" fill="#e60012" />
      </svg>
      <div className="pointer-events-none absolute top-[306px] left-[949px] h-[31px] w-[115px] border-[3px] border-[#e60012]" />
      <span
        className="pointer-events-none absolute top-[640px] left-[863px] text-[16.3px] leading-[26px] whitespace-nowrap text-white opacity-60"
        style={{ fontFamily: '"Liberation Sans", sans-serif' }}
      >
        https://blog.csdn.net/weixin_42082084
      </span>
    </div>
  );
}
